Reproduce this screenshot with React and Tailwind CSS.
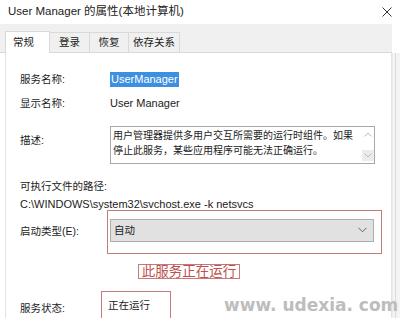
import React from "react";

const font = {
  fontFamily: '"Liberation Sans", "Noto Sans CJK SC", sans-serif',
};

function Tab({ label, active, width }) {
  if (active) {
    return (
      <div className="h-[22px] w-[45px] bg-white border border-b-0 border-[#d9d9d9] flex items-start pl-[7px] pt-[5px] -mb-px relative z-10">
        {label}
      </div>
    );
  }
  return (
    <div
      className={
        "h-[20px] bg-[#f0f0f0] border border-l-0 border-b-0 border-[#d9d9d9] flex items-start justify-center pt-[4px] " +
        width
      }
    >
      {label}
    </div>
  );
}

function Row({ label, children, className = "" }) {
  return (
    <div className={"flex items-center " + className}>
      <div className="w-[90px] shrink-0">{label}</div>
      {children}
    </div>
  );
}

export default function App() {
  return (
    <div
      className="w-[400px] h-[318px] bg-white relative overflow-hidden text-[10.5px] text-[#1b1b1b] leading-none"
      style={font}
    >
      {/* title bar */}
      <div className="h-[24px] flex items-center justify-between pl-[8px] pr-[8px]">
        <span className="text-[11.5px] text-[#222]">User Manager 的属性(本地计算机)</span>
        <svg width="10" height="10" viewBox="0 0 10 10">
          <path d="M0.5 0.5 L9.5 9.5 M9.5 0.5 L0.5 9.5" stroke="#333" strokeWidth="1" />
        </svg>
      </div>

      {/* tab strip */}
      <div className="h-[29px] bg-[#f0f0f0] flex items-end pl-[5px] border-b border-[#d9d9d9] mr-[8px]">
        <Tab label="常规" active />
        <Tab label="登录" width="w-[40px]" />
        <Tab label="恢复" width="w-[39px]" />
        <Tab label="依存关系" width="w-[51px]" />
      </div>

      <div className="flex h-[265px]">
        <div className="ml-[5px] w-[387px] border-l border-r border-[#e3e3e3] flex flex-col pl-[14px] pt-[19px]">
          <Row label="服务名称:" className="h-[16px]">
            <span className="bg-[#3d8fe0] text-white text-[11px] px-[1px] py-[2px]">UserManager</span>
          </Row>
          <Row label="显示名称:" className="h-[16px] mt-[11px]">
            <span className="text-[11px]">User Manager</span>
          </Row>
          <div className="flex mt-[17px] h-[38px]">
            <div className="w-[90px] shrink-0 pt-[9px]">描述:</div>
            <div className="w-[265px] h-[38px] border border-[#a9a9a9] flex">
              <div className="flex-1 pl-[2px] pt-[1px] leading-[15px] text-[10px] whitespace-nowrap overflow-hidden">
                用户管理器提供多用户交互所需要的运行时组件。如果
                <br />
                停止此服务，某些应用程序可能无法正确运行。
              </div>
              <div className="w-[13px] flex flex-col items-center justify-between py-[2px]">
                <svg width="8" height="5" viewBox="0 0 8 5" className="mt-[3px]">
                  <path d="M0.5 4.5 L4 1 L7.5 4.5" stroke="#b8b8b8" fill="none" />
                </svg>
                <div className="w-[12px] h-[11px] bg-[#ececec] flex items-center justify-center">
                  <svg width="8" height="5" viewBox="0 0 8 5">
                    <path d="M0.5 0.5 L4 4 L7.5 0.5" stroke="#b8b8b8" fill="none" />
                  </svg>
                </div>
              </div>
            </div>
          </div>
          <div className="h-[16px] mt-[17px] flex items-center">可执行文件的路径:</div>
          <div className="h-[16px] mt-[7px] flex items-center text-[11px]">
            C:\WINDOWS\system32\svchost.exe -k netsvcs
          </div>
          <div className="flex items-center mt-[0px]">
            <div className="w-[87px] shrink-0">启动类型(E):</div>
            <div className="w-[275px] h-[44px] border border-[#c47b7b] pl-[2px] pt-[8px] pr-[7px]">
              <div className="h-[23px] bg-[#e1e1e1] border border-[#adadad] flex items-center justify-between pl-[3px] pr-[6px]">
                <span>自动</span>
                <svg width="9" height="6" viewBox="0 0 9 6">
                  <path d="M0.5 0.8 L4.5 4.8 L8.5 0.8" stroke="#666" fill="none" />
                </svg>
              </div>
            </div>
          </div>
          <div className="ml-[118px] mt-[10px] w-[102px] h-[17px] border border-[#c47b7b] text-[#c0504d] text-[13.5px] whitespace-nowrap flex items-center justify-center">
            此服务正在运行
          </div>
          <div className="mt-[6px] w-[350px] h-px bg-[#c8c8c8]" />
          <div className="flex items-center mt-[6px]">
            <div className="w-[81px] shrink-0 pt-[4px]">服务状态:</div>
            <div className="w-[70px] h-[30px] border border-[#c47b7b] border-b-0 pl-[6px] pt-[8px]">正在运行</div>
          </div>
        </div>
        <div className="flex-1 bg-[#f4f4f4] border-l border-[#ececec] flex">
          <div className="ml-[2px] w-px bg-[#dadada]" />
        </div>
      </div>

      <div
        className="absolute left-[224px] top-[297px] text-[17px] font-bold text-[#bdbdbd] whitespace-nowrap"
        style={{ fontFamily: '"DejaVu Sans", sans-serif' }}
      >
        www. udexia. com
      </div>
    </div>
  );
}
